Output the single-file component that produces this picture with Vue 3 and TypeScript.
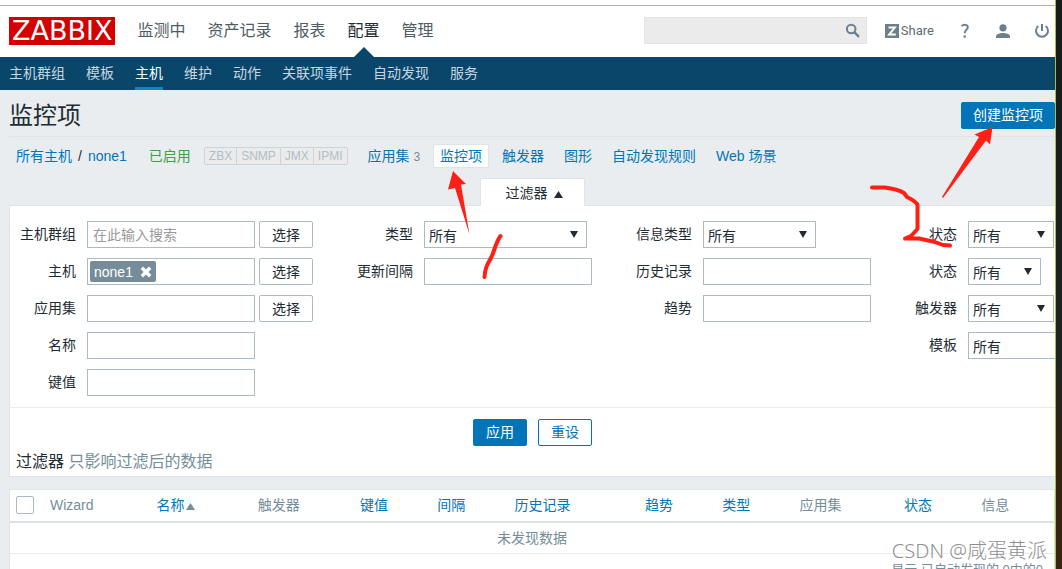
<script setup lang="ts">
import { ref } from 'vue'

interface Column {
  label: string
  cls: string
  sortable: boolean
  sorted?: boolean
}

const mainMenu: string[] = ['监测中', '资产记录', '报表', '配置', '管理']
const activeMain = ref('配置')
const subMenu: string[] = ['主机群组', '模板', '主机', '维护', '动作', '关联项事件', '自动发现', '服务']
const activeSub = ref('主机')
const agents: string[] = ['ZBX', 'SNMP', 'JMX', 'IPMI']

const columns: Column[] = [
  { label: 'Wizard', cls: 'c-wizard', sortable: false },
  { label: '名称', cls: 'c-name', sortable: true, sorted: true },
  { label: '触发器', cls: 'c-trigger', sortable: false },
  { label: '键值', cls: 'c-key', sortable: true },
  { label: '间隔', cls: 'c-key', sortable: true },
  { label: '历史记录', cls: 'c-history', sortable: true },
  { label: '趋势', cls: 'c-key', sortable: true },
  { label: '类型', cls: 'c-key', sortable: true },
  { label: '应用集', cls: 'c-app', sortable: false },
  { label: '状态', cls: 'c-key', sortable: true },
  { label: '信息', cls: 'c-info', sortable: false },
]

const stateFilters = [
  { id: 'f-state', label: '状态', cls: 'w-state' },
  { id: 'f-status', label: '状态', cls: 'w-status' },
  { id: 'f-triggers', label: '触发器', cls: 'w-state' },
  { id: 'f-template', label: '模板', cls: 'w-template' },
]
</script>

<template>
  <div class="screen">
    <div class="page">
      <header class="top">
        <a href="#" class="logo">ZABBIX</a>
        <nav class="main-nav">
          <a v-for="m in mainMenu" :key="m" href="#" :class="{ active: m === activeMain }" @click.prevent="activeMain = m">{{ m }}</a>
        </nav>
        <div class="tools">
          <form class="search" @submit.prevent>
            <input type="text" aria-label="Search" />
            <button type="submit" aria-label="Search">
              <svg width="16" height="16" viewBox="0 0 16 16"><circle cx="6.2" cy="6" r="4.3" fill="none" stroke="#6c7f8b" stroke-width="2" /><path d="M9.3 9.2 14 13.8" stroke="#6c7f8b" stroke-width="2.4" /></svg>
            </button>
          </form>
          <a href="#" class="share">
            <svg width="14" height="14" viewBox="0 0 14 14"><path fill="#6c7f8b" d="M0 0h14v14H0z" /><path fill="none" stroke="#fff" stroke-width="2" d="M3.5 3.5h6.3L4.2 10.5h6.6" /></svg>
            <span>Share</span>
          </a>
          <a href="#" class="help" aria-label="Help">
            <svg width="10" height="16" viewBox="0 0 10 16"><path fill="none" stroke="#6c7f8b" stroke-width="2" d="M1.6 3.2C3.4 1.2 7.8 1.3 7.8 4.3c0 2.3-3.1 2.6-3.1 6" /><path fill="#6c7f8b" d="M3.5 12.4h2.3v2.3H3.5z" /></svg>
          </a>
          <a href="#" class="user" aria-label="User">
            <svg width="16" height="16" viewBox="0 0 16 16"><circle cx="8" cy="4.8" r="3.6" fill="#6c7f8b" /><path fill="#6c7f8b" d="M1 15v-1.800C1 11 5 10 8 10s7 1 7 3.200V15z" /></svg>
          </a>
          <a href="#" class="power" aria-label="Sign out">
            <svg width="16" height="16" viewBox="0 0 16 16"><path fill="none" stroke="#6c7f8b" stroke-width="2" d="M8 1v7M4.300 3a6 6 0 1 0 7.400 0" /></svg>
          </a>
        </div>
      </header>

      <nav class="sub-nav">
        <a v-for="s in subMenu" :key="s" href="#" :class="{ active: s === activeSub }" @click.prevent="activeSub = s">{{ s }}</a>
      </nav>

      <main>
        <div class="title-row">
          <h1>监控项</h1>
          <button type="button" class="primary create">创建监控项</button>
        </div>

        <div class="crumbs">
          <a href="#">所有主机</a>
          <span class="slash">/</span>
          <a href="#">none1</a>
          <span class="enabled">已启用</span>
          <span class="agents"><span v-for="a in agents" :key="a">{{ a }}</span></span>
          <span class="apps"><a href="#">应用集</a> <sup>3</sup></span>
          <a href="#" class="current">监控项</a>
          <a href="#" class="entry">触发器</a>
          <a href="#" class="entry">图形</a>
          <a href="#" class="entry">自动发现规则</a>
          <a href="#" class="entry">Web 场景</a>
        </div>

        <div class="tab-row">
          <button type="button" class="filter-tab">过滤器
            <svg width="9" height="7" viewBox="0 0 9 7"><path fill="#1f2c33" d="M4.500 0 9 7H0z" /></svg>
          </button>
        </div>

        <form class="filter" @submit.prevent>
          <div class="fields">
            <div class="group g1">
              <label for="f-group">主机群组</label>
              <div class="field"><input id="f-group" type="text" placeholder="在此输入搜索" /><button type="button" class="pick">选择</button></div>
              <label for="f-host">主机</label>
              <div class="field">
                <div class="multi">
                  <span class="chip">none1
                    <button type="button" aria-label="Remove none1"><svg width="12" height="12" viewBox="0 0 12 12"><path stroke="#fff" stroke-width="3.400" d="M1.800 1.800l8.400 8.400M10.200 1.800l-8.400 8.400" /></svg></button>
                  </span>
                  <input id="f-host" type="text" />
                </div>
                <button type="button" class="pick">选择</button>
              </div>
              <label for="f-app">应用集</label>
              <div class="field"><input id="f-app" type="text" /><button type="button" class="pick">选择</button></div>
              <label for="f-name">名称</label>
              <div class="field short"><input id="f-name" type="text" /></div>
              <label for="f-key">键值</label>
              <div class="field short"><input id="f-key" type="text" /></div>
            </div>
            <div class="group g2">
              <label for="f-type">类型</label>
              <div class="field"><span class="sel w-type"><select id="f-type"><option>所有</option></select></span></div>
              <label for="f-interval">更新间隔</label>
              <div class="field"><input id="f-interval" type="text" /></div>
            </div>
            <div class="group g2">
              <label for="f-info">信息类型</label>
              <div class="field"><span class="sel w-info"><select id="f-info"><option>所有</option></select></span></div>
              <label for="f-history">历史记录</label>
              <div class="field"><input id="f-history" type="text" /></div>
              <label for="f-trends">趋势</label>
              <div class="field"><input id="f-trends" type="text" /></div>
            </div>
            <div class="group g4">
              <template v-for="f in stateFilters" :key="f.id">
                <label :for="f.id">{{ f.label }}</label>
                <div class="field"><span class="sel" :class="f.cls"><select :id="f.id"><option>所有</option></select></span></div>
              </template>
            </div>
          </div>
          <div class="actions">
            <button type="submit" class="primary">应用</button>
            <button type="reset" class="outline">重设</button>
          </div>
          <p class="subfilter">过滤器 <span>只影响过滤后的数据</span></p>
        </form>

        <table class="list">
          <thead>
            <tr>
              <th class="c-check"><input type="checkbox" aria-label="全选" /></th>
              <th v-for="c in columns" :key="c.label" :class="c.cls">
                <a v-if="c.sortable" href="#">{{ c.label }}<svg v-if="c.sorted" width="9" height="7" viewBox="0 0 9 7"><path fill="#768d99" d="M4.500 0 9 7H0z" /></svg></a>
                <template v-else>{{ c.label }}</template>
              </th>
            </tr>
          </thead>
          <tbody>
            <tr><td colspan="12" class="empty">未发现数据</td></tr>
            <tr><td colspan="12" class="total">显示 已自动发现的 0中的0</td></tr>
          </tbody>
        </table>
      </main>
    </div>
    <div class="edge"></div>

    <svg class="marks" width="1062" height="569" viewBox="0 0 1062 569" aria-hidden="true">
      <g fill="#ff2015">
        <path d="M453 171 466 184 461 184.500 469.500 234.500 455 188 448 189.500z" />
        <path d="M992.500 127 990 144.500 986 140.500 943 198 942 197 979 137 974.500 134.500z" />
      </g>
      <g fill="none" stroke="#ff2015" stroke-width="4" stroke-linecap="round" stroke-linejoin="round">
        <path d="M500.500 236C496 242 495 249 491.500 257 488 264 485 266 484.500 277" />
        <path d="M872 187.500H885C893 188.500 899 190 904 193L907 197C912 199.500 917 202 917.500 205V229L911 236 905 238.500H919L935 242 943 245 950 245.500" />
      </g>
    </svg>
    <div class="watermark">CSDN @咸蛋黄派</div>
  </div>
</template>

<style>
body {
  margin: 0;
}
</style>

<style scoped>
.screen {
  position: relative;
  display: flex;
  height: 100vh;
  overflow: hidden;
  background: #e9edf0;
  color: #1f2c33;
  font: 14px/20px "Liberation Sans", "Noto Sans CJK SC", sans-serif;
}
.screen * {
  box-sizing: border-box;
}
.page {
  flex: 1;
  min-width: 0;
  overflow: hidden;
  background: #e9edf0;
}
.edge {
  width: 7px;
  border-left: 1px solid #9fc24a;
  background: linear-gradient(#171a1b 0%, #202324 64%, #35220f 84%, #3b2412 100%);
}
a {
  color: #0275b8;
  text-decoration: none;
}
button,
input,
select {
  margin: 0;
  font: inherit;
  color: inherit;
}
button {
  cursor: pointer;
}
svg {
  display: block;
}
.top {
  display: flex;
  align-items: center;
  height: 57px;
  padding: 4px 5px 0 9px;
  background: linear-gradient(#b0b0b0, #b0b0b0) 0 5px / 100% 1px no-repeat #fff;
}
.logo {
  padding: 0 3px;
  background: #d40000;
  color: #fff;
  font: 27px/28px "DejaVu Sans", sans-serif;
}
.main-nav {
  display: flex;
  gap: 22px;
  margin-left: 22px;
  font-size: 16px;
  height: 53px;
  line-height: 53px;
}
.main-nav a {
  position: relative;
  color: #4f5c64;
}
.main-nav a.active {
  color: #1f2c33;
}
.main-nav a.active::after {
  content: "";
  position: absolute;
  left: 50%;
  bottom: 0;
  margin-left: -10px;
  border: 10px solid transparent;
  border-top: 0;
  border-bottom-color: #0a466a;
}
.tools {
  display: flex;
  align-items: center;
  margin-left: auto;
}
.search {
  display: flex;
  align-items: center;
  width: 223px;
  height: 27px;
  border: 1px solid #e2e4e5;
  background: #ebebeb;
}
.search input {
  flex: 1;
  min-width: 0;
  border: 0;
  background: none;
}
.search button {
  padding: 0 5px;
  border: 0;
  background: none;
}
.share {
  display: flex;
  align-items: center;
  gap: 2px;
  margin-left: 18px;
  color: #5d6c75;
  font: 13px/16px Roboto, sans-serif;
}
.help {
  margin-left: 26px;
}
.user {
  margin-left: 25px;
}
.power {
  margin-left: 23px;
}
.sub-nav {
  display: flex;
  gap: 21px;
  height: 33px;
  padding-left: 9px;
  background: #0a466a;
  line-height: 33px;
}
.sub-nav a {
  color: #c6d6e0;
}
.sub-nav a.active {
  border-bottom: 3px solid #0f84cb;
  color: #fff;
}
main {
  padding-left: 9px;
}
.title-row {
  display: flex;
  align-items: center;
  justify-content: space-between;
  height: 47px;
  padding-top: 4px;
  border-bottom: 1px solid #dfe4e7;
}
h1 {
  margin: 0;
  padding-top: 2px;
  font-size: 24px;
  font-weight: 400;
  line-height: 36px;
}
.primary,
.outline {
  height: 27px;
  padding: 0 12px;
  border: 1px solid #0275b8;
  border-radius: 2px;
  line-height: 25px;
}
.primary {
  background: #0275b8;
  color: #fff;
}
.outline {
  background: #fff;
  color: #0275b8;
}
.create {
  padding: 0 11px;
}
.crumbs {
  display: flex;
  align-items: center;
  height: 41px;
  padding: 0 0 3px 7px;
  white-space: nowrap;
}
.slash {
  margin: 0 6px;
}
.enabled {
  margin-left: 22px;
  color: #429e47;
}
.agents {
  display: flex;
  margin-left: 13px;
  border: 1px solid #ccd5d9;
  border-radius: 2px;
  background: #ebebeb;
  color: #b0bec5;
  font-size: 12px;
  line-height: 16px;
}
.agents span {
  padding: 0 4px;
}
.agents span + span {
  border-left: 1px solid #ccd5d9;
}
.apps {
  margin: 0 13px 0 20px;
}
.apps sup {
  color: #768d99;
  font-size: 12px;
  line-height: 12px;
  vertical-align: baseline;
}
.current {
  padding: 1px 6px;
  border: 1px solid #dfe4e7;
  border-radius: 2px;
  background: #fff;
}
.entry {
  margin-left: 20px;
}
.current + .entry {
  margin-left: 13px;
}
.tab-row {
  display: flex;
  justify-content: center;
}
.filter-tab {
  display: flex;
  align-items: center;
  gap: 6px;
  height: 28px;
  margin-bottom: -1px;
  padding: 0 21px 0 25px;
  border: 1px solid #dfe4e7;
  border-bottom: 0;
  border-radius: 2px 2px 0 0;
  background: #fff;
  z-index: 1;
}
.filter-tab svg {
  margin-top: 3px;
}
.filter {
  border: 1px solid #dfe4e7;
  border-right: 0;
  background: #fff;
}
.fields {
  display: grid;
  grid-template-columns: minmax(0, 303fr) minmax(0, 279fr) minmax(0, 279fr) minmax(0, 184fr);
  padding: 15px 0 11px;
  border-bottom: 1px solid #ebebeb;
}
.group {
  display: grid;
  grid-auto-rows: 27px;
  gap: 10px 11px;
  align-content: start;
}
.g1 {
  grid-template-columns: 66px minmax(0, 1fr);
}
.g2 {
  grid-template-columns: 100px minmax(0, 1fr);
}
.g4 {
  grid-template-columns: 86px minmax(0, 1fr);
}
.group label {
  line-height: 27px;
  text-align: right;
  white-space: nowrap;
}
.field {
  display: flex;
  gap: 4px;
}
.field > input,
.multi {
  flex: 1;
  min-width: 0;
  height: 27px;
  padding: 0 5px;
  border: 1px solid #acbbc2;
  background: #fff;
}
.field > input::placeholder {
  color: #9a9a9a;
}
.field.short {
  padding-right: 58px;
}
.multi {
  display: flex;
  align-items: center;
  padding: 0 2px;
}
.multi input {
  flex: 1;
  min-width: 0;
  border: 0;
  padding: 0;
}
.chip {
  display: flex;
  align-items: center;
  gap: 7px;
  height: 21px;
  padding: 0 4px;
  border-radius: 2px;
  background: #768d99;
  color: #fff;
}
.chip button {
  padding: 0;
  border: 0;
  background: none;
}
.pick {
  width: 54px;
  height: 27px;
  padding: 0;
  border: 1px solid #acbbc2;
  border-radius: 2px;
  background: #fff;
}
.sel {
  position: relative;
  flex: none;
}
.sel select {
  width: 100%;
  height: 27px;
  padding: 2px 4px 0;
  border: 1px solid #acbbc2;
  border-radius: 0;
  background: #fff;
  appearance: none;
}
.sel::after {
  content: "";
  position: absolute;
  right: 9px;
  top: 10px;
  border: 4px solid transparent;
  border-top: 7px solid #1f2c33;
  border-bottom: 0;
  pointer-events: none;
}
.w-type {
  width: 163px;
}
.w-info {
  width: 113px;
}
.w-state {
  width: 86px;
}
.w-status {
  width: 73px;
}
.w-template {
  width: 130px;
}
.actions {
  display: flex;
  justify-content: center;
  gap: 11px;
  padding-top: 11px;
}
.subfilter {
  margin: 0;
  padding: 4px 6px 3px;
  font-size: 16px;
  line-height: 23px;
}
.subfilter span {
  color: #768d99;
}
.list {
  width: 100%;
  margin-top: 12px;
  border: 1px solid #dfe4e7;
  border-spacing: 0;
  background: #fff;
  table-layout: fixed;
}
.list th {
  height: 33px;
  padding: 0 0 2px 5px;
  border-bottom: 2px solid #dce2e5;
  color: #768d99;
  font-weight: 400;
  text-align: left;
  white-space: nowrap;
}
.list th.c-check {
  width: 35px;
  padding-left: 6px;
}
.list th a {
  display: flex;
  align-items: center;
  gap: 2px;
}
.list th svg {
  margin-top: 3px;
}
.list th input {
  display: block;
  width: 18px;
  height: 18px;
  border: 1px solid #acbbc2;
  border-radius: 2px;
  background: #fff;
  appearance: none;
}
.c-wizard {
  width: 10.2%;
}
.c-name {
  width: 9.7%;
}
.c-trigger {
  width: 9.8%;
}
.c-key {
  width: 7.4%;
}
.c-history {
  width: 12.5%;
}
.c-app {
  width: 10%;
}
.empty {
  height: 31px;
  padding: 0;
  border-bottom: 1px solid #ebebeb;
  color: #768d99;
  text-align: center;
}
.total {
  padding: 6px 11px;
  color: #768d99;
  font-size: 13px;
  text-align: right;
}
.marks {
  position: absolute;
  left: 0;
  top: 0;
  pointer-events: none;
}
.watermark {
  position: absolute;
  right: 15px;
  bottom: 6px;
  color: #8e9092;
  font: 20px/24px "Noto Sans", "Noto Sans CJK SC", sans-serif;
  font-weight: 300;
  text-shadow: 1px 1px 0 #fff;
}
</style>
